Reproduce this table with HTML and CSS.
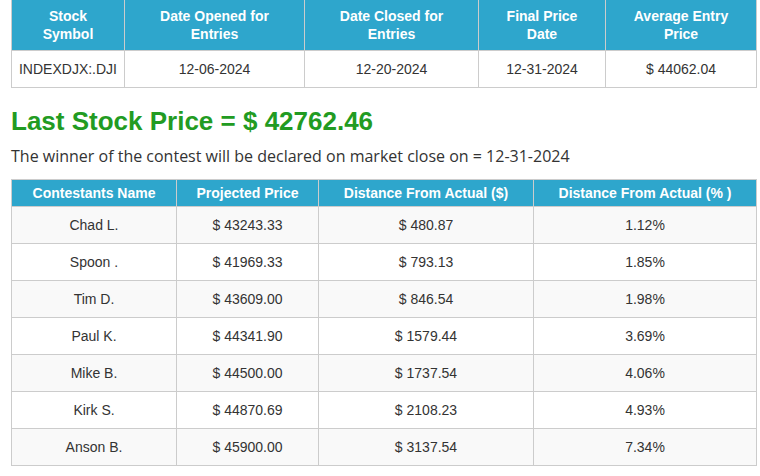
FILE: index.html
```html
<!DOCTYPE html>
<html>
<head>
<meta charset="utf-8">
<link rel="stylesheet" href="styles.css">
</head>
<body>
<div class="page">
  <table class="grid info">
    <colgroup>
      <col class="c1"><col class="c2"><col class="c3"><col class="c4"><col class="c5">
    </colgroup>
    <thead>
      <tr>
        <th>Stock Symbol</th>
        <th>Date Opened for Entries</th>
        <th>Date Closed for Entries</th>
        <th>Final Price Date</th>
        <th>Average Entry Price</th>
      </tr>
    </thead>
    <tbody>
      <tr>
        <td>INDEXDJX:.DJI</td>
        <td>12-06-2024</td>
        <td>12-20-2024</td>
        <td>12-31-2024</td>
        <td>$ 44062.04</td>
      </tr>
    </tbody>
  </table>

  <h2 class="last-price">Last Stock Price = $ 42762.46</h2>
  <p class="note">The winner of the contest will be declared on market close on = 12-31-2024</p>

  <table class="grid results">
    <colgroup>
      <col class="r1"><col class="r2"><col class="r3"><col class="r4">
    </colgroup>
    <thead>
      <tr>
        <th>Contestants Name</th>
        <th>Projected Price</th>
        <th>Distance From Actual ($)</th>
        <th>Distance From Actual (% )</th>
      </tr>
    </thead>
    <tbody>
      <tr><td>Chad L.</td><td>$ 43243.33</td><td>$ 480.87</td><td>1.12%</td></tr>
      <tr><td>Spoon .</td><td>$ 41969.33</td><td>$ 793.13</td><td>1.85%</td></tr>
      <tr><td>Tim D.</td><td>$ 43609.00</td><td>$ 846.54</td><td>1.98%</td></tr>
      <tr><td>Paul K.</td><td>$ 44341.90</td><td>$ 1579.44</td><td>3.69%</td></tr>
      <tr><td>Mike B.</td><td>$ 44500.00</td><td>$ 1737.54</td><td>4.06%</td></tr>
      <tr><td>Kirk S.</td><td>$ 44870.69</td><td>$ 2108.23</td><td>4.93%</td></tr>
      <tr><td>Anson B.</td><td>$ 45900.00</td><td>$ 3137.54</td><td>7.34%</td></tr>
    </tbody>
  </table>
</div>
</body>
</html>
```

FILE: styles.css
```css
html, body {
  margin: 0;
  padding: 0;
  background: #ffffff;
}

.page {
  padding: 0 4px 0 11px;
  font-family: "Liberation Sans", Arial, sans-serif;
  color: #333333;
}

.grid {
  width: 745px;
  border-collapse: collapse;
  table-layout: fixed;
  font-size: 14px;
}

.grid th,
.grid td {
  border: 1px solid #cccccc;
  text-align: center;
}

.grid th {
  background: #2ea6cc;
  color: #ffffff;
  font-weight: bold;
  line-height: 18px;
}

.grid td {
  line-height: 20px;
  padding: 8px 4px;
}

.info th {
  padding: 7px 14px;
  border-top: none;
}

.info .c1 { width: 113px; }
.info .c2 { width: 180px; }
.info .c3 { width: 174px; }
.info .c4 { width: 127px; }
.info .c5 { width: 151px; }

.results th {
  padding: 4px 4px 4px;
}

.results .r1 { width: 165px; }
.results .r2 { width: 142px; }
.results .r3 { width: 215px; }
.results .r4 { width: 223px; }

.results tbody tr:nth-child(odd) td {
  background: #f9f9f9;
}

.last-price {
  margin: 18px 0 0;
  font-family: "Liberation Sans", Arial, sans-serif;
  font-size: 26px;
  font-weight: bold;
  line-height: 30px;
  color: #229b22;
}

.note {
  margin: 8px 0 11px;
  font-family: "Open Sans", sans-serif;
  font-size: 16px;
  line-height: 24px;
  color: #333333;
}
```
